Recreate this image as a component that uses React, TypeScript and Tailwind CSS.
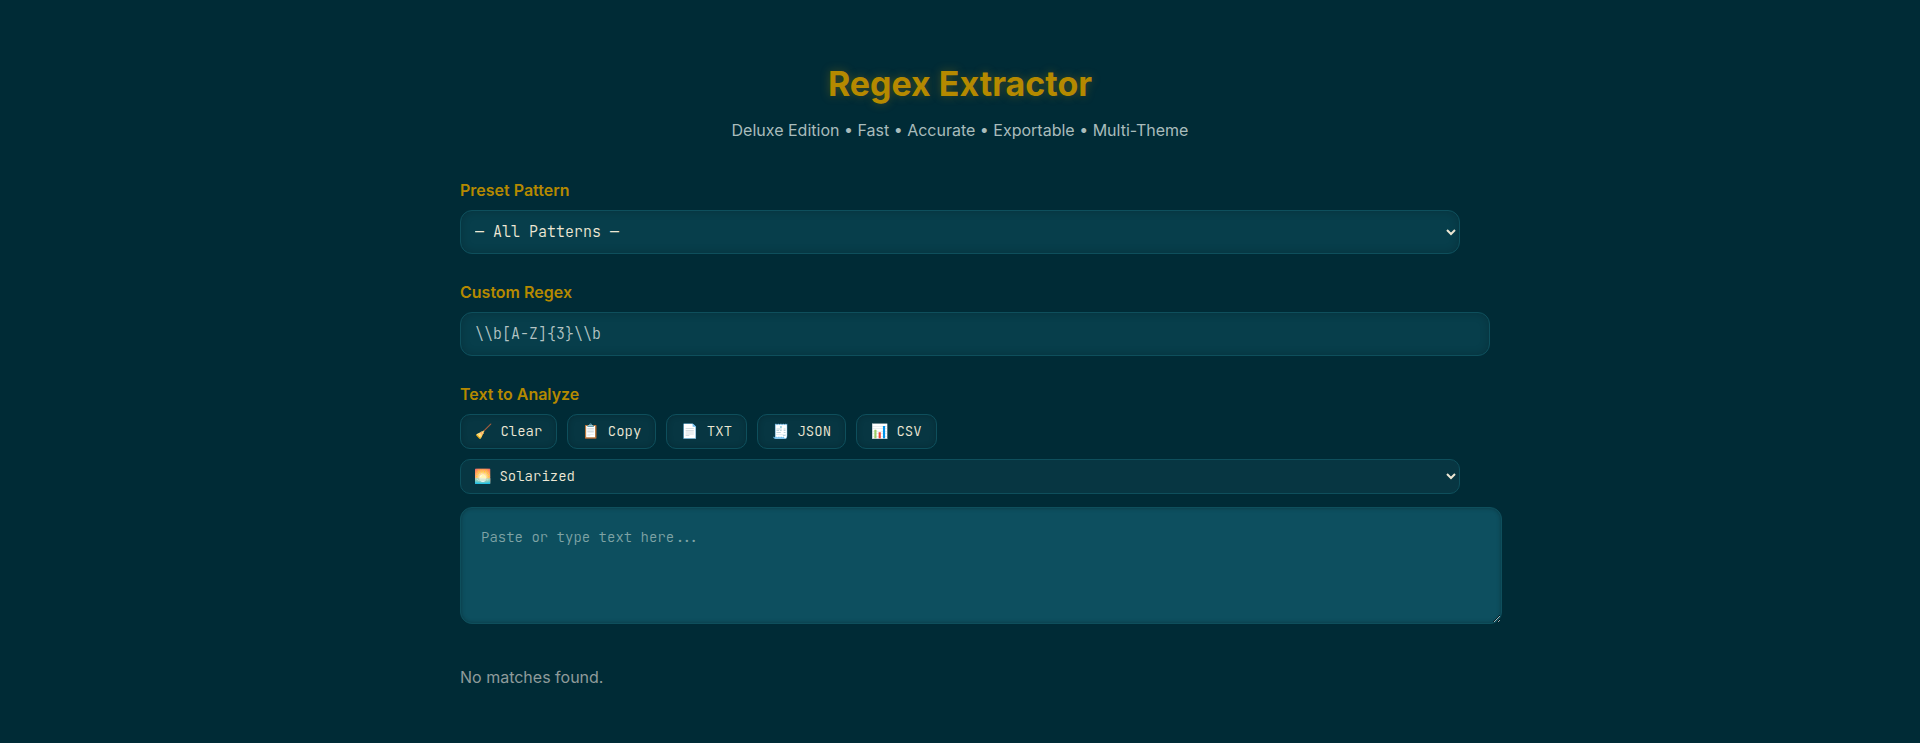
import React from 'react';

const mono = "font-['JetBrains_Mono','DejaVu_Sans_Mono',monospace] font-light";

function Label({ children }: { children: React.ReactNode }) {
  return <label className="block mb-[10px] h-[20px] text-[16px] leading-[20px] font-semibold text-[#b58900]">{children}</label>;
}

export default function App() {
  const buttons = [
    { icon: '🧹', text: 'Clear' },
    { icon: '📋', text: 'Copy' },
    { icon: '📄', text: 'TXT' },
    { icon: '🧾', text: 'JSON' },
    { icon: '📊', text: 'CSV' },
  ];

  return (
    <div className="min-h-[743px] bg-[#002b36] font-['Inter',sans-serif] overflow-hidden">
      <div className="w-[1000px] mx-auto pt-[62px]">
        <h1 className="h-[44px] text-center text-[34px] leading-[44px] font-bold text-[#b58900] [text-shadow:0_0_10px_rgba(181,137,0,0.35)]">
          Regex Extractor
        </h1>
        <p className="mt-[14px] h-[20px] text-center text-[16px] leading-[20px] text-[#a9bcbc]">
          Deluxe Edition • Fast • Accurate • Exportable • Multi-Theme
        </p>

        <div className="mt-[40px]">
          <Label>Preset Pattern</Label>
          <select className={`block w-full h-[44px] pl-[10px] pr-[4px] rounded-[12px] border border-[#0e4f5c] bg-[#073e4b] shadow-[inset_0_0_10px_rgba(0,0,0,0.2)] text-[15px] text-[#eee8d5] ${mono}`}>
            <option>— All Patterns —</option>
          </select>
        </div>

        <div className="mt-[28px]">
          <Label>Custom Regex</Label>
          <input
            readOnly
            value="\\b[A-Z]{3}\\b"
            className={`block box-content w-full h-[14px] py-[14px] px-[14px] rounded-[12px] border border-[#0e4f5c] bg-[#073e4b] shadow-[inset_0_0_10px_rgba(0,0,0,0.2)] text-[15px] text-[#b4c4c4] outline-none ${mono}`}
          />
        </div>

        <div className="mt-[28px]">
          <Label>Text to Analyze</Label>
          <div className="flex gap-[10px]">
            {buttons.map((b) => (
              <button
                key={b.text}
                className={`h-[35px] px-[14px] rounded-[10px] border border-[#0e4f5c] bg-[#073642] shadow-[inset_0_0_6px_rgba(0,0,0,0.2)] text-[14px] text-[#eee8d5] whitespace-pre ${mono}`}
              >
                {b.icon} {b.text}
              </button>
            ))}
          </div>
          <select className={`block mt-[10px] w-full h-[35px] pl-[9px] pr-[4px] pb-[2px] rounded-[10px] border border-[#0e4f5c] bg-[#073642] text-[14px] text-[#eee8d5] ${mono}`}>
            <option>🌅 Solarized</option>
          </select>
          <textarea
            readOnly
            placeholder="Paste or type text here..."
            className={`block box-content mt-[13px] w-full h-[75px] p-[20px] rounded-[12px] border border-[#0e4f5c] bg-[#0d4f5f] shadow-[inset_0_0_4px_rgba(0,0,0,0.3)] text-[14px] leading-[18px] text-[#eee8d5] placeholder:text-[#7fa3a5] outline-none ${mono}`}
          />
        </div>

        <p className="mt-[43px] h-[20px] text-[16px] leading-[20px] text-[#8f9b9b]">No matches found.</p>
      </div>
    </div>
  );
}
